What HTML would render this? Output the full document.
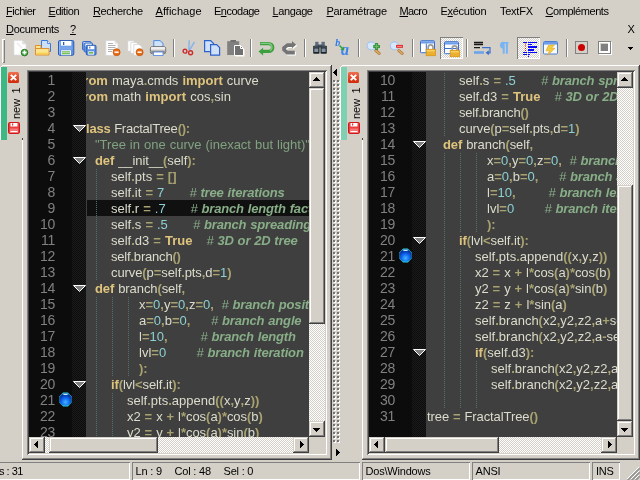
<!DOCTYPE html>
<html lang="fr"><head><meta charset="utf-8"><title>Notepad++</title>
<style>
*{box-sizing:border-box;margin:0;padding:0}
html,body{width:640px;height:480px;overflow:hidden;background:#d4d0c8}
body{position:relative;font-family:"Liberation Sans",sans-serif;font-size:11px;color:#000}
.a{position:absolute}
.m{position:absolute;white-space:pre;line-height:13px;height:13px;font-size:11px;letter-spacing:-0.3px}
.m u{text-decoration:underline;text-underline-offset:1px;text-decoration-thickness:1px}
.sep{position:absolute;top:39px;width:2px;height:18px;border-left:1px solid #808080;border-right:1px solid #fff}
.ic{position:absolute;top:40px;width:16px;height:16px;overflow:visible}
.chk{position:absolute;top:37px;width:23px;height:22px;box-shadow:inset 1px 1px #808080,inset -1px -1px #fff;background-color:#fff;background-image:conic-gradient(#d4d0c8 25%,#fff 0 50%,#d4d0c8 0 75%,#fff 0);background-size:2px 2px}
.tabc{position:absolute;top:65px;height:395px;border-top:1px solid #fff;border-left:1px solid #fff;box-shadow:inset -1px -1px #404040,inset -2px -2px #808080}
.ed{position:absolute;top:70px;height:385px;box-shadow:inset 1px 1px #808080,inset -1px -1px #fff,inset 2px 2px #404040,inset -2px -2px #d4d0c8;background:#3f3f3f;overflow:hidden}
.in{position:absolute;left:2px;top:2px;right:2px;bottom:2px;overflow:hidden}
.lnm{position:absolute;left:0;top:0;width:43px;height:365px;background:#0c0c0c}
.fm{position:absolute;left:43px;top:0;width:14px;height:365px;background-color:#0c0c0c;background-image:conic-gradient(#1b1b1b 25%,#0c0c0c 0 50%,#1b1b1b 0 75%,#0c0c0c 0);background-size:2px 2px}
.ln{position:absolute;left:0;width:26px;text-align:right;font-size:14px;line-height:17px;height:16px;color:#808080;white-space:pre;letter-spacing:-0.3px}
.code{position:absolute;left:57px;top:0;right:16px;height:365px;overflow:hidden;background:#3f3f3f}
.l{position:absolute;white-space:pre;font-size:13px;line-height:16px;height:16px;color:#dcdccc;word-spacing:0.39px}
.k{color:#dfc47d;font-weight:bold}
.o{color:#a8a270;font-weight:bold}
.n{color:#8cd0d3}
.s{color:#80a280}
.c{color:#88ae88;font-weight:bold;font-style:italic;letter-spacing:-0.15px}
.c i{font-weight:normal}
.g{position:absolute;width:1px;background-image:linear-gradient(transparent 50%,#4c7272 0);background-size:1px 2px}
.btn{position:absolute;width:16px;height:16px;background:#d4d0c8;box-shadow:inset -1px -1px #404040,inset 1px 1px #d4d0c8,inset -2px -2px #808080,inset 2px 2px #fff}
.trk{position:absolute;background-color:#fff;background-image:conic-gradient(#d4d0c8 25%,#fff 0 50%,#d4d0c8 0 75%,#fff 0);background-size:2px 2px}
.cor{position:absolute;width:16px;height:16px;background:#d4d0c8}
.ar{position:absolute;width:0;height:0;border:4px solid transparent}
.sf{position:absolute;top:462px;height:18px;box-shadow:inset 1px 1px #808080,inset -1px -1px #fff}
.st{position:absolute;top:465px;white-space:pre;font-size:11px;line-height:13px;letter-spacing:-0.2px}
.vt{position:absolute;white-space:pre;font-size:11px;line-height:13px;transform-origin:0 0;transform:rotate(-90deg);will-change:transform;letter-spacing:0;word-spacing:2.3px}
.gl{position:absolute;left:0;top:0;width:100%;height:365px;will-change:transform}
.fold{position:absolute;left:44px;width:14px;height:8px}
</style></head>
<body>
<div class="a" id="menubar" style="left:0;top:0;width:640px;height:38px;will-change:transform">
<span class="m" style="left:6px;top:5px;letter-spacing:-0.50px"><u>F</u>ichier</span>
<span class="m" style="left:48.5px;top:5px;letter-spacing:-0.44px"><u>E</u>dition</span>
<span class="m" style="left:93px;top:5px;letter-spacing:-0.40px"><u>R</u>echerche</span>
<span class="m" style="left:155.5px;top:5px;letter-spacing:0.04px"><u>A</u>ffichage</span>
<span class="m" style="left:214px;top:5px;letter-spacing:-0.51px">E<u>n</u>codage</span>
<span class="m" style="left:272.5px;top:5px;letter-spacing:-0.39px"><u>L</u>angage</span>
<span class="m" style="left:326.5px;top:5px;letter-spacing:-0.31px"><u>P</u>aramétrage</span>
<span class="m" style="left:399.5px;top:5px;letter-spacing:-0.64px"><u>M</u>acro</span>
<span class="m" style="left:440.5px;top:5px;letter-spacing:-0.29px">E<u>x</u>écution</span>
<span class="m" style="left:500px;top:5px;letter-spacing:-0.25px">TextFX</span>
<span class="m" style="left:545.5px;top:5px;letter-spacing:-0.44px"><u>C</u>ompléments</span>
<span class="m" style="left:6px;top:23px"><u>D</u>ocuments</span>
<span class="m" style="left:70px;top:23px"><u>?</u></span>
<span class="m" style="left:627.5px;top:23px">X</span>
</div>
<div class="a" id="toolbar" style="left:0;top:36px;width:640px;height:28px"></div>
<div class="a" style="left:2px;top:39px;width:3px;height:24px;box-shadow:inset 1px 1px #fff,inset -1px -1px #808080"></div>
<div class="sep" style="left:173px"></div>
<div class="sep" style="left:250px"></div>
<div class="sep" style="left:304px"></div>
<div class="sep" style="left:358px"></div>
<div class="sep" style="left:412px"></div>
<div class="sep" style="left:466px"></div>
<div class="sep" style="left:566px"></div>
<div class="chk" style="left:440px"></div>
<div class="chk" style="left:517px"></div>
<svg class="ic" style="left:13px;top:40px" viewBox="0 0 16 16"><path d="M1 .5h8.500l3.500 3.500v11h-12z" fill="#fff" stroke="#dcdcdc" stroke-width=".7"/><path d="M9.500 .5v3.500h3.500z" fill="#e4e4e4" stroke="#d0d0d0" stroke-width=".5"/><path d="M4 3l5 5" stroke="#f0f0f0" stroke-width="2"/><circle cx="11.500" cy="12.600" r="3.300" fill="#4cac4c" stroke="#2c762c"/><path d="M9.500 12.600h4M11.500 10.600v4" stroke="#fff" stroke-width="1.500"/></svg>
<svg class="ic" style="left:35px;top:40px" viewBox="0 0 16 16"><path d="M6.500 .5h6l3 3v8h-9z" fill="#cddff8" stroke="#3a78d8"/><path d="M12.500 .5v3h3" fill="#e8f0fc" stroke="#3a78d8" stroke-width=".8"/><path d="M.5 5.500h5.500v3h8v6.500h-13.500z" fill="#fbe48c" stroke="#e09030"/><path d="M.5 8.500h6" stroke="#e09030"/><path d="M1.500 13.500h11.500" stroke="#f8d050" stroke-width="1.600"/></svg>
<svg class="ic" style="left:58px;top:40px" viewBox="0 0 16 16"><rect x=".5" y=".5" width="15.300" height="14.800" rx="1.300" fill="#5c90e2" stroke="#2e5cb4"/><path d="M1.500 1.500v13" stroke="#8cb4f0"/><rect x="2.800" y="1" width="10.600" height="4.700" fill="#fff"/><rect x="5" y="2" width="1.300" height="3" fill="#2e5cb4"/><rect x="2" y="6.200" width="12.500" height="3.600" fill="#78a4ea"/><rect x="3.200" y="10.200" width="9.800" height="5" fill="#f4f6fc"/><rect x="4" y="11.300" width="8" height="1.200" fill="#6cb848"/><rect x="4" y="13.100" width="8" height="1.200" fill="#6cb848"/></svg>
<svg class="ic" style="left:82px;top:40px" viewBox="0 0 16 16"><rect x=".5" y="1.500" width="8.500" height="8.500" rx="1" fill="#78a4ea" stroke="#3a6cc4"/><rect x="1.800" y="2.200" width="6" height="3" fill="#f0f4fc"/><rect x="2.200" y="3" width="8.500" height="9" rx="1" fill="#78a4ea" stroke="#3a6cc4"/><rect x="3.500" y="3.700" width="6" height="3" fill="#f0f4fc"/><rect x="4.300" y="5.300" width="9.700" height="9.700" rx="1" fill="#5c90e2" stroke="#2e5cb4"/><rect x="6" y="5.900" width="6.300" height="3.300" fill="#fff"/><rect x="7.300" y="6.500" width="1" height="2" fill="#2e5cb4"/><rect x="6.300" y="11.300" width="5.800" height="3.400" fill="#f0f4fc"/><rect x="7" y="12" width="4.300" height="1.600" fill="#6cb848"/></svg>
<svg class="ic" style="left:105px;top:40px" viewBox="0 0 16 16"><path d="M.8 .5h8.700l3.500 3.500v11.500h-12.200z" fill="#fff" stroke="#d4d4d4" stroke-width=".7"/><path d="M9.500 .5v3.500h3.500z" fill="#e8e8e8"/><path d="M3 3.500h5M3 5.500h7.500M3 7.500h7.500M3 9.500h6M3 11.500h4" stroke="#a8a8a8" stroke-width=".9"/><circle cx="11.600" cy="12.200" r="3.500" fill="#ea6c14" stroke="#c45408" stroke-width=".8"/><path d="M9.500 12.200h4.200" stroke="#fff" stroke-width="1.500"/></svg>
<svg class="ic" style="left:128px;top:40px" viewBox="0 0 16 16"><path d="M-.2 .8h5.500l2 2v8.500h-7.500z" fill="#fff" stroke="#cfcfcf" stroke-width=".7"/><path d="M2.800 2.500h5.500l2 2v9h-7.500z" fill="#fff" stroke="#cfcfcf" stroke-width=".7"/><path d="M5.800 4.500h5.500l2.700 2.500v8.500h-8.200z" fill="#fff" stroke="#cfcfcf" stroke-width=".7"/><circle cx="11.600" cy="12.200" r="3.500" fill="#ea6c14" stroke="#c45408" stroke-width=".8"/><path d="M9.500 12.200h4.200" stroke="#fff" stroke-width="1.500"/></svg>
<svg class="ic" style="left:150px;top:40px" viewBox="0 0 16 16"><path d="M3.800 .6h6.200l3 2.800v5h-9.200z" fill="#cfe4fb" stroke="#4a8ae0"/><rect x=".4" y="6.600" width="15.300" height="7.200" rx="2" fill="#dcdcdc" stroke="#686868" stroke-width=".9"/><rect x="1" y="7.200" width="14" height="1.600" fill="#f4f4f4"/><rect x="1.200" y="10.600" width="13.600" height="2.800" fill="#8c8c8c"/><rect x="3.500" y="12" width="9.500" height="3.500" fill="#fff" stroke="#5a90e0" stroke-width=".9"/></svg>
<svg class="ic" style="left:182px;top:40px" viewBox="0 0 16 16"><path d="M7.300 .2L6.800 10M12.500 2L7.200 10.500" stroke="#8cb4e8" stroke-width="1.500" fill="none"/><circle cx="3" cy="11.200" r="1.900" fill="none" stroke="#cc2c2c" stroke-width="1.400"/><circle cx="8.600" cy="12.800" r="2" fill="none" stroke="#cc2c2c" stroke-width="1.400"/></svg>
<svg class="ic" style="left:204px;top:40px" viewBox="0 0 16 16"><path d="M.6 .6h6l3 3v8h-9z" fill="#d0e0f8" stroke="#2c62cc" stroke-width="1.200"/><path d="M6.600 4.600h6l3 3v7.500h-9z" fill="#d0e0f8" stroke="#2c62cc" stroke-width="1.200"/></svg>
<svg class="ic" style="left:227px;top:40px" viewBox="0 0 16 16"><rect x="0.200" y="1.200" width="12" height="13.800" fill="#808080"/><rect x="3.500" y="0" width="5.500" height="2" fill="#707070"/><path d="M8.500 6.500h6l3 3v7h-9z" fill="#fff" opacity=".9"/><path d="M7.500 5.500h6l3 3v7h-9z" fill="#707070" stroke="#fff"/><path d="M13.500 5.500v3h3" fill="none" stroke="#fff"/></svg>
<svg class="ic" style="left:259px;top:40px" viewBox="0 0 16 16"><path d="M1 3.600H9.800A3.900 3.900 0 0 1 9.800 11.400H3.500" fill="none" stroke="#3f9f3f" stroke-width="3.400"/><path d="M-.5 11.400l4.600-3.700v7.800z" fill="#3f9f3f"/><path d="M1.500 3.300H9.800A4.100 4.100 0 0 1 11 10.800" fill="none" stroke="#84cc84" stroke-width="1.200"/></svg>
<svg class="ic" style="left:282px;top:40px" viewBox="0 0 16 16"><path d="M10 3.200H5L.2 7v3.500l4.300 4h8.300v-3.800H6L4.200 9.500V8.200L6 6.900h4v1.400l4.200-3.600L10 1.100z" fill="#fff" transform="translate(1,1)"/><path d="M10 3.200H5L.2 7v3.500l4.300 4h8.300v-3.800H6L4.200 9.500V8.200L6 6.900h4v1.400l4.200-3.600L10 1.100z" fill="#747474"/></svg>
<svg class="ic" style="left:313px;top:40px" viewBox="0 0 16 16"><rect x="2.200" y="1.800" width="3.300" height="4.500" fill="#5c6c7c"/><rect x="8.500" y="1.800" width="3.300" height="4.500" fill="#5c6c7c"/><rect x="5" y="4.500" width="4" height="3" fill="#485868"/><rect x=".2" y="5.800" width="6.300" height="8" rx=".8" fill="#1c2428"/><rect x="7.500" y="5.800" width="6.300" height="8" rx=".8" fill="#1c2428"/><rect x="1.300" y="8.500" width="4" height="3.500" fill="#8494a8"/><rect x="8.600" y="8.500" width="4" height="3.500" fill="#8494a8"/><rect x="1" y="6.300" width="4.800" height="1.300" fill="#4c5c6c"/><rect x="8.300" y="6.300" width="4.800" height="1.300" fill="#4c5c6c"/></svg>
<svg class="ic" style="left:335px;top:40px" viewBox="0 0 16 16"><text x=".2" y="6.400" font-family="Liberation Serif,serif" font-weight="bold" font-style="italic" font-size="10" fill="#3278e8">b</text><text x="6" y="15" font-family="Liberation Serif,serif" font-weight="bold" font-style="italic" font-size="16" fill="#3a84ec">a</text><path d="M4.500 5.500l3 3" stroke="#2ca048" stroke-width="1.400"/><path d="M9.300 10.300l-4-.6 3.300-3.200z" fill="#2ca048"/></svg>
<svg class="ic" style="left:367px;top:40px" viewBox="0 0 16 16"><circle cx="4.100" cy="5.900" r="4" fill="#d8e8fc" stroke="#a4c4ee" stroke-width="1.100"/><path d="M8.800 10.600l3.400 2.700" stroke="#b07830" stroke-width="3" stroke-linecap="round"/><path d="M8.800 10.600l3.400 2.700" stroke="#d8a868" stroke-width="1.600" stroke-linecap="round"/><path d="M9.600 2.900v7.100M6.200 6.400h6.800" stroke="#3a923a" stroke-width="3"/><path d="M9.600 4v5M7.300 6.400h4.600" stroke="#6cbc6c" stroke-width="1"/></svg>
<svg class="ic" style="left:390px;top:40px" viewBox="0 0 16 16"><circle cx="4.300" cy="5.900" r="4" fill="#d8e8fc" stroke="#a4c4ee" stroke-width="1.100"/><path d="M8.800 10.600l3.400 2.700" stroke="#b07830" stroke-width="3" stroke-linecap="round"/><path d="M8.800 10.600l3.400 2.700" stroke="#d8a868" stroke-width="1.600" stroke-linecap="round"/><rect x="6.100" y="4.900" width="6.800" height="2.900" fill="#e42424"/><rect x="7" y="5.900" width="5" height=".9" fill="#ff9c9c"/></svg>
<svg class="ic" style="left:420px;top:40px" viewBox="0 0 16 16"><rect x=".5" y=".7" width="14" height="12" rx=".8" fill="#fff" stroke="#3c70cc"/><rect x="1" y="1.200" width="13" height="2.300" fill="#6c9cea"/><path d="M6.300 3.500v9" stroke="#3c70cc"/><path d="M8.200 9.500v-2.300a2.400 2.400 0 0 1 4.800 0v2.300" fill="none" stroke="#9c9c9c" stroke-width="1.700"/><rect x="6.200" y="9.300" width="9.300" height="6.400" fill="#ecb030" stroke="#d89418" stroke-width=".8"/><rect x="6.800" y="10" width="8" height="1.500" fill="#f8d060"/></svg>
<svg class="ic" style="left:444px;top:41px" viewBox="0 0 16 16"><rect x=".5" y=".7" width="14" height="12" rx=".8" fill="#fff" stroke="#3c70cc"/><rect x="1" y="1.200" width="13" height="2.300" fill="#6c9cea"/><path d="M1 7.500h13" stroke="#3c70cc"/><path d="M8.200 9.500v-2.300a2.400 2.400 0 0 1 4.800 0v2.300" fill="none" stroke="#9c9c9c" stroke-width="1.700"/><rect x="6.200" y="9.300" width="9.300" height="6.400" fill="#ecb030" stroke="#d89418" stroke-width=".8"/><rect x="6.800" y="10" width="8" height="1.500" fill="#f8d060"/></svg>
<svg class="ic" style="left:474px;top:40px" viewBox="0 0 16 16"><path d="M0 2.500h9M0 4.500h9M0 7.700h6" stroke="#181818" stroke-width="1.300"/><rect x="0" y="11.200" width="10" height="2.600" fill="#6ca4ec"/><path d="M8 7.600h8v5.200h-2" fill="none" stroke="#3c70cc" stroke-width="1.200"/><path d="M11.600 12.800l3.200-2.500v5z" fill="#3c70cc"/></svg>
<svg class="ic" style="left:498px;top:40px" viewBox="0 0 16 16"><path d="M3.500 2.800h7" stroke="#78b4f4" stroke-width="1.600"/><path d="M5.700 2v11.800M8.900 2v11.800" stroke="#78b4f4" stroke-width="2"/><path d="M5.500 2a3.200 3.200 0 0 0 0 6.400z" fill="#78b4f4" stroke="#78b4f4" stroke-width=".8"/></svg>
<svg class="ic" style="left:521px;top:41px" viewBox="0 0 16 16"><path d="M2 1.500h4M7 1.500h9M7 3.500h4M2 11.500h4M7 11.500h9M2 13.500h4M7 13.500h2M7 15.300h1" stroke="#0808f8" stroke-width="1.200"/><rect x="7" y="5" width="9" height="2" fill="#0808f8"/><rect x="7" y="8" width="6" height="2" fill="#0808f8"/><path d="M4 2.500h1v1h-1zM4 4.600h1v1h-1zM4 6.900h1v1h-1zM4 9h1v1h-1z" fill="#f01010"/></svg>
<svg class="ic" style="left:543px;top:40px" viewBox="0 0 16 16"><rect x=".5" y="1.500" width="14" height="12.500" rx="1" fill="#f8fafc" stroke="#4c80d4"/><rect x="1" y="2" width="13" height="2.600" fill="#6c9cea"/><path d="M11.500 4.800l-6 .5-2.500 5.500h3.500l-2 4.500 7.500-7h-3.500z" fill="#f4cc40" stroke="#dca820" stroke-width=".6"/></svg>
<div class="a" style="left:575px;top:41px;width:13px;height:13px;border:1px solid #808080"><div class="a" style="left:2px;top:2px;width:7px;height:7px;border-radius:50%;background:#cc0000"></div></div>
<div class="a" style="left:598px;top:41px;width:13px;height:13px;border:1px solid #808080;box-shadow:1px 1px 0 #fff,inset -2px -2px #fff,inset 1px 1px #fff"><div class="a" style="left:2px;top:2px;width:7px;height:7px;background:#808080"></div></div>
<svg class="a" style="left:628px;top:47px" width="5" height="3" viewBox="0 0 5 3" shape-rendering="crispEdges"><path d="M0 0h5v1h-1v1h-1v1h-1v-1h-1v-1h-1z" fill="#000"/></svg>
<div class="a" style="left:2px;top:65px;width:329px;height:1px;background:#fff"></div>
<div class="a" style="left:1px;top:66px;width:1px;height:1px;background:#fff"></div>
<div class="a" style="left:0px;top:67px;width:1px;height:73px;background:#fff"></div>
<div class="a" style="left:330px;top:66px;width:1px;height:393px;background:#808080"></div>
<div class="a" style="left:331px;top:65px;width:1px;height:395px;background:#404040"></div>
<div class="a" style="left:23px;top:458px;width:308px;height:1px;background:#808080"></div>
<div class="a" style="left:22px;top:459px;width:310px;height:1px;background:#404040"></div>
<div class="a" style="left:1px;top:67px;width:6px;height:73px;background:#3cb884"></div>
<svg class="a" style="left:8px;top:72px" width="11" height="11" viewBox="0 0 11 11"><defs><linearGradient id="rg0" x1="0" y1="0" x2="0" y2="1"><stop offset="0" stop-color="#f07050"/><stop offset="1" stop-color="#d02808"/></linearGradient></defs><rect width="11" height="11" rx="1.500" fill="url(#rg0)"/><path d="M2.800 2.800l5.400 5.400M8.200 2.800l-5.400 5.400" stroke="#fff" stroke-width="1.900"/></svg>
<span class="vt" style="left:9.5px;top:118.5px">new 1</span>
<svg class="a" style="left:8px;top:122px" width="12" height="12" viewBox="0 0 12 12"><rect x=".5" y=".5" width="11" height="11" rx="1.200" fill="#e84040" stroke="#d01818"/><rect x="2.500" y="1" width="7" height="3.500" fill="#fff"/><rect x="4" y="1.500" width="1.200" height="2" fill="#e03030"/><rect x="2" y="6.500" width="8" height="4.500" fill="#f47878"/><rect x="2.500" y="9" width="7" height="1" fill="#fff"/></svg>
<div class="a" style="left:22px;top:140px;width:1px;height:318px;background:#fff"></div>
<div class="a" style="left:22px;top:138px;width:1px;height:2px;background:#404040"></div>
<div class="ed" style="left:27px;width:300px"><div class="in">
<div class="lnm"></div><div class="fm"></div>
<div class="code" style="width:223px">
<div class="a" style="left:1px;top:128px;width:223px;height:16px;background:#101010"></div>
<div class="gl">
<div class="l" style="left:-7px;top:1px"><span class="k">from</span> maya<span class="o">.</span>cmds <span class="k">import</span> curve</div>
<div class="l" style="left:-7px;top:17px;letter-spacing:0.054px"><span class="k">from</span> math <span class="k">import</span> cos<span class="o">,</span>sin</div>
<div class="l" style="left:-7px;top:49px;letter-spacing:-0.230px"><span class="k">class</span> FractalTree<span class="o">(</span><span class="o">)</span><span class="o">:</span></div>
<div class="l" style="left:9px;top:65px"><span class="s">"Tree in one curve (inexact but light)"</span></div>
<div class="l" style="left:9px;top:81px;letter-spacing:-0.084px"><span class="k">def</span> __init__<span class="o">(</span>self<span class="o">)</span><span class="o">:</span></div>
<div class="g" style="left:10px;top:96px;height:16px"></div>
<div class="l" style="left:25px;top:97px">self<span class="o">.</span>pts <span class="o">=</span> <span class="o">[</span><span class="o">]</span></div>
<div class="g" style="left:10px;top:112px;height:16px"></div>
<div class="l" style="left:25px;top:113px">self<span class="o">.</span>it <span class="o">=</span> <span class="n">7</span></div>
<div class="l c" style="left:103.5px;top:113px"><i>#</i> tree iterations</div>
<div class="g" style="left:10px;top:128px;height:16px"></div>
<div class="l" style="left:25px;top:129px">self<span class="o">.</span>r <span class="o">=</span> <span class="n">.7</span></div>
<div class="l c" style="left:104.5px;top:129px"><i>#</i> branch length factor</div>
<div class="g" style="left:10px;top:144px;height:16px"></div>
<div class="l" style="left:25px;top:145px">self<span class="o">.</span>s <span class="o">=</span> <span class="n">.5</span></div>
<div class="l c" style="left:107px;top:145px"><i>#</i> branch spreading</div>
<div class="g" style="left:10px;top:160px;height:16px"></div>
<div class="l" style="left:25px;top:161px">self<span class="o">.</span>d3 <span class="o">=</span> <span class="k">True</span></div>
<div class="l c" style="left:120.5px;top:161px"><i>#</i> 3D or 2D tree</div>
<div class="g" style="left:10px;top:176px;height:16px"></div>
<div class="l" style="left:25px;top:177px;letter-spacing:-0.200px">self<span class="o">.</span>branch<span class="o">(</span><span class="o">)</span></div>
<div class="g" style="left:10px;top:192px;height:16px"></div>
<div class="l" style="left:25px;top:193px;letter-spacing:-0.086px">curve<span class="o">(</span>p<span class="o">=</span>self<span class="o">.</span>pts<span class="o">,</span>d<span class="o">=</span><span class="n">1</span><span class="o">)</span></div>
<div class="l" style="left:9px;top:209px;letter-spacing:-0.081px"><span class="k">def</span> branch<span class="o">(</span>self<span class="o">,</span></div>
<div class="g" style="left:10px;top:224px;height:16px"></div>
<div class="g" style="left:26px;top:224px;height:16px"></div>
<div class="g" style="left:42px;top:224px;height:16px"></div>
<div class="l" style="left:53.0px;top:225px">x<span class="o">=</span><span class="n">0</span><span class="o">,</span>y<span class="o">=</span><span class="n">0</span><span class="o">,</span>z<span class="o">=</span><span class="n">0</span><span class="o">,</span></div>
<div class="l c" style="left:135.5px;top:225px"><i>#</i> branch position</div>
<div class="g" style="left:10px;top:240px;height:16px"></div>
<div class="g" style="left:26px;top:240px;height:16px"></div>
<div class="g" style="left:42px;top:240px;height:16px"></div>
<div class="l" style="left:53.0px;top:241px">a<span class="o">=</span><span class="n">0</span><span class="o">,</span>b<span class="o">=</span><span class="n">0</span><span class="o">,</span></div>
<div class="l c" style="left:125px;top:241px"><i>#</i> branch angle</div>
<div class="g" style="left:10px;top:256px;height:16px"></div>
<div class="g" style="left:26px;top:256px;height:16px"></div>
<div class="g" style="left:42px;top:256px;height:16px"></div>
<div class="l" style="left:53.0px;top:257px">l<span class="o">=</span><span class="n">10</span><span class="o">,</span></div>
<div class="l c" style="left:114.5px;top:257px"><i>#</i> branch length</div>
<div class="g" style="left:10px;top:272px;height:16px"></div>
<div class="g" style="left:26px;top:272px;height:16px"></div>
<div class="g" style="left:42px;top:272px;height:16px"></div>
<div class="l" style="left:53.0px;top:273px">lvl<span class="o">=</span><span class="n">0</span></div>
<div class="l c" style="left:110.5px;top:273px"><i>#</i> branch iteration</div>
<div class="g" style="left:10px;top:288px;height:16px"></div>
<div class="g" style="left:26px;top:288px;height:16px"></div>
<div class="g" style="left:42px;top:288px;height:16px"></div>
<div class="l" style="left:53.0px;top:289px"><span class="o">)</span><span class="o">:</span></div>
<div class="g" style="left:10px;top:304px;height:16px"></div>
<div class="l" style="left:25px;top:305px;letter-spacing:-0.094px"><span class="k">if</span><span class="o">(</span>lvl<span class="o">&lt;</span>self<span class="o">.</span>it<span class="o">)</span><span class="o">:</span></div>
<div class="g" style="left:10px;top:320px;height:16px"></div>
<div class="g" style="left:26px;top:320px;height:16px"></div>
<div class="l" style="left:41px;top:321px">self<span class="o">.</span>pts<span class="o">.</span>append<span class="o">(</span><span class="o">(</span>x<span class="o">,</span>y<span class="o">,</span>z<span class="o">)</span><span class="o">)</span></div>
<div class="g" style="left:10px;top:336px;height:16px"></div>
<div class="g" style="left:26px;top:336px;height:16px"></div>
<div class="l" style="left:41px;top:337px;letter-spacing:-0.042px">x2 <span class="o">=</span> x <span class="o">+</span> l<span class="o">*</span>cos<span class="o">(</span>a<span class="o">)</span><span class="o">*</span>cos<span class="o">(</span>b<span class="o">)</span></div>
<div class="g" style="left:10px;top:352px;height:16px"></div>
<div class="g" style="left:26px;top:352px;height:16px"></div>
<div class="l" style="left:41px;top:353px;letter-spacing:-0.042px">y2 <span class="o">=</span> y <span class="o">+</span> l<span class="o">*</span>cos<span class="o">(</span>a<span class="o">)</span><span class="o">*</span>sin<span class="o">(</span>b<span class="o">)</span></div>
</div>
</div>
<div class="gl" style="width:57px">
<div class="ln" style="top:0px">1</div>
<div class="ln" style="top:16px">2</div>
<div class="ln" style="top:32px">3</div>
<div class="ln" style="top:48px">4</div>
<svg class="fold" style="top:53px" viewBox="0 0 14 8"><path d="M.5 .5h12l-6 6z" fill="#808080" stroke="#fff" stroke-width="1"/></svg>
<div class="ln" style="top:64px">5</div>
<div class="ln" style="top:80px">6</div>
<svg class="fold" style="top:85px" viewBox="0 0 14 8"><path d="M.5 .5h12l-6 6z" fill="#808080" stroke="#fff" stroke-width="1"/></svg>
<div class="ln" style="top:96px">7</div>
<div class="ln" style="top:112px">8</div>
<div class="ln" style="top:128px">9</div>
<div class="ln" style="top:144px">10</div>
<div class="ln" style="top:160px">11</div>
<div class="ln" style="top:176px">12</div>
<div class="ln" style="top:192px">13</div>
<div class="ln" style="top:208px">14</div>
<svg class="fold" style="top:213px" viewBox="0 0 14 8"><path d="M.5 .5h12l-6 6z" fill="#808080" stroke="#fff" stroke-width="1"/></svg>
<div class="ln" style="top:224px">15</div>
<div class="ln" style="top:240px">16</div>
<div class="ln" style="top:256px">17</div>
<div class="ln" style="top:272px">18</div>
<div class="ln" style="top:288px">19</div>
<div class="ln" style="top:304px">20</div>
<svg class="fold" style="top:309px" viewBox="0 0 14 8"><path d="M.5 .5h12l-6 6z" fill="#808080" stroke="#fff" stroke-width="1"/></svg>
<div class="ln" style="top:320px">21</div>
<svg class="a" style="left:30px;top:320px" width="13" height="15" viewBox="0 0 13 15"><defs><radialGradient id="bg0" cx=".5" cy=".72" r=".62"><stop offset="0" stop-color="#48b4ff"/><stop offset=".55" stop-color="#0c68f0"/><stop offset="1" stop-color="#0830a8"/></radialGradient></defs><path d="M4.200 .5h4.600l3.700 3.800v6.400l-3.700 3.800h-4.600l-3.700-3.800v-6.400z" fill="#28d0dc"/><path d="M6.500 1.500c3 0 5.800 1.800 5.800 4.500v3c0 2.700-2.800 4.500-5.800 4.500s-5.800-1.800-5.800-4.500v-3c0-2.700 2.800-4.500 5.800-4.500z" fill="url(#bg0)"/><rect x="4.300" y="1.800" width="4.400" height="1.200" rx=".6" fill="#c4ecf8"/></svg>
<div class="ln" style="top:336px">22</div>
<div class="ln" style="top:352px">23</div>
</div>
<div class="trk" style="left:280px;top:16px;width:16px;height:333px"></div>
<div class="btn" style="left:280px;top:0"><svg class="a" style="left:4px;top:5px" width="7" height="4" viewBox="0 0 7 4" shape-rendering="crispEdges"><path d="M3 0h1v1h1v1h1v1h1v1h-7v-1h1v-1h1v-1h1z" fill="#000"/></svg></div>
<div class="btn" style="left:280px;top:349px"><svg class="a" style="left:4px;top:7px" width="7" height="4" viewBox="0 0 7 4" shape-rendering="crispEdges"><path d="M0 0h7v1h-1v1h-1v1h-1v1h-1v-1h-1v-1h-1v-1h-1z" fill="#000"/></svg></div>
<div class="btn" style="left:280px;top:16px;height:236px"></div>
<div class="trk" style="left:16px;top:365px;width:248px;height:16px"></div>
<div class="btn" style="left:0;top:365px"><svg class="a" style="left:5px;top:4px" width="4" height="7" viewBox="0 0 4 7" shape-rendering="crispEdges"><path d="M3 0h1v7h-1v-1h-1v-1h-1v-1h-1v-1h1v-1h1v-1h1z" fill="#000"/></svg></div>
<div class="btn" style="left:264px;top:365px"><svg class="a" style="left:7px;top:4px" width="4" height="7" viewBox="0 0 4 7" shape-rendering="crispEdges"><path d="M0 0h1v1h1v1h1v1h1v1h-1v1h-1v1h-1v1h-1z" fill="#000"/></svg></div>
<div class="btn" style="left:20px;top:365px;width:109px"></div>
<div class="cor" style="left:280px;top:365px"></div>
</div></div>
<div class="a" style="left:342px;top:65px;width:297px;height:1px;background:#fff"></div>
<div class="a" style="left:341px;top:66px;width:1px;height:1px;background:#fff"></div>
<div class="a" style="left:340px;top:67px;width:1px;height:73px;background:#fff"></div>
<div class="a" style="left:638px;top:66px;width:1px;height:393px;background:#808080"></div>
<div class="a" style="left:639px;top:65px;width:1px;height:395px;background:#404040"></div>
<div class="a" style="left:363px;top:458px;width:276px;height:1px;background:#808080"></div>
<div class="a" style="left:362px;top:459px;width:278px;height:1px;background:#404040"></div>
<div class="a" style="left:341px;top:67px;width:6px;height:73px;background:#7fd0b0"></div>
<svg class="a" style="left:348px;top:72px" width="11" height="11" viewBox="0 0 11 11"><defs><linearGradient id="rg340" x1="0" y1="0" x2="0" y2="1"><stop offset="0" stop-color="#f07050"/><stop offset="1" stop-color="#d02808"/></linearGradient></defs><rect width="11" height="11" rx="1.500" fill="url(#rg340)"/><path d="M2.800 2.800l5.400 5.400M8.200 2.800l-5.400 5.400" stroke="#fff" stroke-width="1.900"/></svg>
<span class="vt" style="left:349.5px;top:118.5px">new 1</span>
<svg class="a" style="left:348px;top:122px" width="12" height="12" viewBox="0 0 12 12"><rect x=".5" y=".5" width="11" height="11" rx="1.200" fill="#e84040" stroke="#d01818"/><rect x="2.500" y="1" width="7" height="3.500" fill="#fff"/><rect x="4" y="1.500" width="1.200" height="2" fill="#e03030"/><rect x="2" y="6.500" width="8" height="4.500" fill="#f47878"/><rect x="2.500" y="9" width="7" height="1" fill="#fff"/></svg>
<div class="a" style="left:362px;top:140px;width:1px;height:318px;background:#fff"></div>
<div class="a" style="left:362px;top:138px;width:1px;height:2px;background:#404040"></div>
<div class="ed" style="left:367px;width:268px"><div class="in">
<div class="lnm"></div><div class="fm"></div>
<div class="code" style="width:191px">
<div class="gl">
<div class="g" style="left:18px;top:0px;height:16px"></div>
<div class="l" style="left:33px;top:1px">self<span class="o">.</span>s <span class="o">=</span> <span class="n">.5</span></div>
<div class="l c" style="left:115px;top:1px"><i>#</i> branch spreading</div>
<div class="g" style="left:18px;top:16px;height:16px"></div>
<div class="l" style="left:33px;top:17px">self<span class="o">.</span>d3 <span class="o">=</span> <span class="k">True</span></div>
<div class="l c" style="left:128.5px;top:17px"><i>#</i> 3D or 2D tree</div>
<div class="g" style="left:18px;top:32px;height:16px"></div>
<div class="l" style="left:33px;top:33px;letter-spacing:-0.200px">self<span class="o">.</span>branch<span class="o">(</span><span class="o">)</span></div>
<div class="g" style="left:18px;top:48px;height:16px"></div>
<div class="l" style="left:33px;top:49px;letter-spacing:-0.086px">curve<span class="o">(</span>p<span class="o">=</span>self<span class="o">.</span>pts<span class="o">,</span>d<span class="o">=</span><span class="n">1</span><span class="o">)</span></div>
<div class="l" style="left:17px;top:65px;letter-spacing:-0.081px"><span class="k">def</span> branch<span class="o">(</span>self<span class="o">,</span></div>
<div class="g" style="left:18px;top:80px;height:16px"></div>
<div class="g" style="left:34px;top:80px;height:16px"></div>
<div class="g" style="left:50px;top:80px;height:16px"></div>
<div class="l" style="left:61.0px;top:81px">x<span class="o">=</span><span class="n">0</span><span class="o">,</span>y<span class="o">=</span><span class="n">0</span><span class="o">,</span>z<span class="o">=</span><span class="n">0</span><span class="o">,</span></div>
<div class="l c" style="left:143.5px;top:81px"><i>#</i> branch position</div>
<div class="g" style="left:18px;top:96px;height:16px"></div>
<div class="g" style="left:34px;top:96px;height:16px"></div>
<div class="g" style="left:50px;top:96px;height:16px"></div>
<div class="l" style="left:61.0px;top:97px">a<span class="o">=</span><span class="n">0</span><span class="o">,</span>b<span class="o">=</span><span class="n">0</span><span class="o">,</span></div>
<div class="l c" style="left:133px;top:97px"><i>#</i> branch angle</div>
<div class="g" style="left:18px;top:112px;height:16px"></div>
<div class="g" style="left:34px;top:112px;height:16px"></div>
<div class="g" style="left:50px;top:112px;height:16px"></div>
<div class="l" style="left:61.0px;top:113px">l<span class="o">=</span><span class="n">10</span><span class="o">,</span></div>
<div class="l c" style="left:122.5px;top:113px"><i>#</i> branch length</div>
<div class="g" style="left:18px;top:128px;height:16px"></div>
<div class="g" style="left:34px;top:128px;height:16px"></div>
<div class="g" style="left:50px;top:128px;height:16px"></div>
<div class="l" style="left:61.0px;top:129px">lvl<span class="o">=</span><span class="n">0</span></div>
<div class="l c" style="left:118.5px;top:129px"><i>#</i> branch iteration</div>
<div class="g" style="left:18px;top:144px;height:16px"></div>
<div class="g" style="left:34px;top:144px;height:16px"></div>
<div class="g" style="left:50px;top:144px;height:16px"></div>
<div class="l" style="left:61.0px;top:145px"><span class="o">)</span><span class="o">:</span></div>
<div class="g" style="left:18px;top:160px;height:16px"></div>
<div class="l" style="left:33px;top:161px;letter-spacing:-0.094px"><span class="k">if</span><span class="o">(</span>lvl<span class="o">&lt;</span>self<span class="o">.</span>it<span class="o">)</span><span class="o">:</span></div>
<div class="g" style="left:18px;top:176px;height:16px"></div>
<div class="g" style="left:34px;top:176px;height:16px"></div>
<div class="l" style="left:49px;top:177px">self<span class="o">.</span>pts<span class="o">.</span>append<span class="o">(</span><span class="o">(</span>x<span class="o">,</span>y<span class="o">,</span>z<span class="o">)</span><span class="o">)</span></div>
<div class="g" style="left:18px;top:192px;height:16px"></div>
<div class="g" style="left:34px;top:192px;height:16px"></div>
<div class="l" style="left:49px;top:193px;letter-spacing:-0.042px">x2 <span class="o">=</span> x <span class="o">+</span> l<span class="o">*</span>cos<span class="o">(</span>a<span class="o">)</span><span class="o">*</span>cos<span class="o">(</span>b<span class="o">)</span></div>
<div class="g" style="left:18px;top:208px;height:16px"></div>
<div class="g" style="left:34px;top:208px;height:16px"></div>
<div class="l" style="left:49px;top:209px;letter-spacing:-0.042px">y2 <span class="o">=</span> y <span class="o">+</span> l<span class="o">*</span>cos<span class="o">(</span>a<span class="o">)</span><span class="o">*</span>sin<span class="o">(</span>b<span class="o">)</span></div>
<div class="g" style="left:18px;top:224px;height:16px"></div>
<div class="g" style="left:34px;top:224px;height:16px"></div>
<div class="l" style="left:49px;top:225px">z2 <span class="o">=</span> z <span class="o">+</span> l<span class="o">*</span>sin<span class="o">(</span>a<span class="o">)</span></div>
<div class="g" style="left:18px;top:240px;height:16px"></div>
<div class="g" style="left:34px;top:240px;height:16px"></div>
<div class="l" style="left:49px;top:241px">self<span class="o">.</span>branch<span class="o">(</span>x2<span class="o">,</span>y2<span class="o">,</span>z2<span class="o">,</span>a<span class="o">+</span>self<span class="o">.</span>s<span class="o">,</span>b<span class="o">+</span>self<span class="o">.</span>s<span class="o">,</span>lvl<span class="o">+</span><span class="n">1</span><span class="o">)</span></div>
<div class="g" style="left:18px;top:256px;height:16px"></div>
<div class="g" style="left:34px;top:256px;height:16px"></div>
<div class="l" style="left:49px;top:257px">self<span class="o">.</span>branch<span class="o">(</span>x2<span class="o">,</span>y2<span class="o">,</span>z2<span class="o">,</span>a<span class="o">-</span>self<span class="o">.</span>s<span class="o">,</span>b<span class="o">-</span>self<span class="o">.</span>s<span class="o">,</span>lvl<span class="o">+</span><span class="n">1</span><span class="o">)</span></div>
<div class="g" style="left:18px;top:272px;height:16px"></div>
<div class="g" style="left:34px;top:272px;height:16px"></div>
<div class="l" style="left:49px;top:273px"><span class="k">if</span><span class="o">(</span>self<span class="o">.</span>d3<span class="o">)</span><span class="o">:</span></div>
<div class="g" style="left:18px;top:288px;height:16px"></div>
<div class="g" style="left:34px;top:288px;height:16px"></div>
<div class="g" style="left:50px;top:288px;height:16px"></div>
<div class="l" style="left:65px;top:289px">self<span class="o">.</span>branch<span class="o">(</span>x2<span class="o">,</span>y2<span class="o">,</span>z2<span class="o">,</span>a<span class="o">+</span>self<span class="o">.</span>s<span class="o">,</span>b<span class="o">-</span>self<span class="o">.</span>s<span class="o">,</span>lvl<span class="o">+</span><span class="n">1</span><span class="o">)</span></div>
<div class="g" style="left:18px;top:304px;height:16px"></div>
<div class="g" style="left:34px;top:304px;height:16px"></div>
<div class="g" style="left:50px;top:304px;height:16px"></div>
<div class="l" style="left:65px;top:305px">self<span class="o">.</span>branch<span class="o">(</span>x2<span class="o">,</span>y2<span class="o">,</span>z2<span class="o">,</span>a<span class="o">-</span>self<span class="o">.</span>s<span class="o">,</span>b<span class="o">+</span>self<span class="o">.</span>s<span class="o">,</span>lvl<span class="o">+</span><span class="n">1</span><span class="o">)</span></div>
<div class="g" style="left:18px;top:320px;height:16px"></div>
<div class="g" style="left:34px;top:320px;height:16px"></div>
<div class="g" style="left:50px;top:320px;height:16px"></div>
<div class="l" style="left:1px;top:337px;letter-spacing:-0.085px">tree <span class="o">=</span> FractalTree<span class="o">(</span><span class="o">)</span></div>
</div>
</div>
<div class="gl" style="width:57px">
<div class="ln" style="top:0px">10</div>
<div class="ln" style="top:16px">11</div>
<div class="ln" style="top:32px">12</div>
<div class="ln" style="top:48px">13</div>
<div class="ln" style="top:64px">14</div>
<svg class="fold" style="top:69px" viewBox="0 0 14 8"><path d="M.5 .5h12l-6 6z" fill="#808080" stroke="#fff" stroke-width="1"/></svg>
<div class="ln" style="top:80px">15</div>
<div class="ln" style="top:96px">16</div>
<div class="ln" style="top:112px">17</div>
<div class="ln" style="top:128px">18</div>
<div class="ln" style="top:144px">19</div>
<div class="ln" style="top:160px">20</div>
<svg class="fold" style="top:165px" viewBox="0 0 14 8"><path d="M.5 .5h12l-6 6z" fill="#808080" stroke="#fff" stroke-width="1"/></svg>
<div class="ln" style="top:176px">21</div>
<svg class="a" style="left:30px;top:176px" width="13" height="15" viewBox="0 0 13 15"><defs><radialGradient id="bg340" cx=".5" cy=".72" r=".62"><stop offset="0" stop-color="#48b4ff"/><stop offset=".55" stop-color="#0c68f0"/><stop offset="1" stop-color="#0830a8"/></radialGradient></defs><path d="M4.200 .5h4.600l3.700 3.800v6.400l-3.700 3.800h-4.600l-3.700-3.800v-6.400z" fill="#28d0dc"/><path d="M6.500 1.500c3 0 5.800 1.800 5.800 4.500v3c0 2.700-2.800 4.500-5.800 4.500s-5.800-1.800-5.800-4.500v-3c0-2.700 2.800-4.500 5.800-4.500z" fill="url(#bg340)"/><rect x="4.300" y="1.800" width="4.400" height="1.200" rx=".6" fill="#c4ecf8"/></svg>
<div class="ln" style="top:192px">22</div>
<div class="ln" style="top:208px">23</div>
<div class="ln" style="top:224px">24</div>
<div class="ln" style="top:240px">25</div>
<div class="ln" style="top:256px">26</div>
<div class="ln" style="top:272px">27</div>
<svg class="fold" style="top:277px" viewBox="0 0 14 8"><path d="M.5 .5h12l-6 6z" fill="#808080" stroke="#fff" stroke-width="1"/></svg>
<div class="ln" style="top:288px">28</div>
<div class="ln" style="top:304px">29</div>
<div class="ln" style="top:320px">30</div>
<div class="ln" style="top:336px">31</div>
</div>
<div class="trk" style="left:248px;top:16px;width:16px;height:333px"></div>
<div class="btn" style="left:248px;top:0"><svg class="a" style="left:4px;top:5px" width="7" height="4" viewBox="0 0 7 4" shape-rendering="crispEdges"><path d="M3 0h1v1h1v1h1v1h1v1h-7v-1h1v-1h1v-1h1z" fill="#000"/></svg></div>
<div class="btn" style="left:248px;top:349px"><svg class="a" style="left:4px;top:7px" width="7" height="4" viewBox="0 0 7 4" shape-rendering="crispEdges"><path d="M0 0h7v1h-1v1h-1v1h-1v1h-1v-1h-1v-1h-1v-1h-1z" fill="#000"/></svg></div>
<div class="btn" style="left:248px;top:113px;height:236px"></div>
<div class="trk" style="left:16px;top:365px;width:216px;height:16px"></div>
<div class="btn" style="left:0;top:365px"><svg class="a" style="left:5px;top:4px" width="4" height="7" viewBox="0 0 4 7" shape-rendering="crispEdges"><path d="M3 0h1v7h-1v-1h-1v-1h-1v-1h-1v-1h1v-1h1v-1h1z" fill="#000"/></svg></div>
<div class="btn" style="left:232px;top:365px"><svg class="a" style="left:7px;top:4px" width="4" height="7" viewBox="0 0 4 7" shape-rendering="crispEdges"><path d="M0 0h1v1h1v1h1v1h1v1h-1v1h-1v1h-1v1h-1z" fill="#000"/></svg></div>
<div class="btn" style="left:16px;top:365px;width:114px"></div>
<div class="cor" style="left:248px;top:365px"></div>
</div></div>
<svg class="a" style="left:332px;top:66px" width="8" height="394" viewBox="0 0 8 394"><defs><pattern id="dots" x="1" y="14" width="4" height="4" patternUnits="userSpaceOnUse"><rect x="1" y="1" width="2" height="2" fill="#fff"/><rect x="0" y="0" width="2" height="2" fill="#747474"/></pattern></defs><rect x="1" y="14" width="7" height="363" fill="url(#dots)" shape-rendering="crispEdges"/><path transform="translate(1,3)" d="M3 0h1v7h-1v-1h-1v-1h-1v-1h-1v-1h1v-1h1v-1h1z" fill="#000" shape-rendering="crispEdges"/><path transform="translate(4,383)" d="M0 0h1v1h1v1h1v1h1v1h-1v1h-1v1h-1v1h-1z" fill="#000" shape-rendering="crispEdges"/></svg>
<div class="sf" style="left:-2px;width:132px"></div>
<div class="sf" style="left:132px;width:228px"></div>
<div class="sf" style="left:362px;width:108px"></div>
<div class="sf" style="left:472px;width:118px"></div>
<div class="sf" style="left:592px;width:28px"></div>
<div class="a" id="statustext" style="left:0;top:0;width:640px;height:480px;will-change:transform">
<span class="st" style="left:-1px;letter-spacing:-0.5px">s : 31</span>
<span class="st" style="left:135.5px">Ln : 9</span>
<span class="st" style="left:174.5px">Col : 48</span>
<span class="st" style="left:223.500px">Sel : 0</span>
<span class="st" style="left:365.500px">Dos\Windows</span>
<span class="st" style="left:475.500px">ANSI</span>
<span class="st" style="left:596px">INS</span>
</div>
<svg class="a" style="left:626px;top:466px" width="14" height="14" viewBox="0 0 14 14"><path d="M13 1L1 13M13 5L5 13M13 9L9 13" stroke="#fff" stroke-width="1"/><path d="M14 1.500L1.500 14M14 2.500L2.500 14M14 5.500L5.500 14M14 6.500L6.500 14M14 9.500L9.500 14M14 10.500L10.500 14" stroke="#808080" stroke-width="1"/></svg>
</body></html>
